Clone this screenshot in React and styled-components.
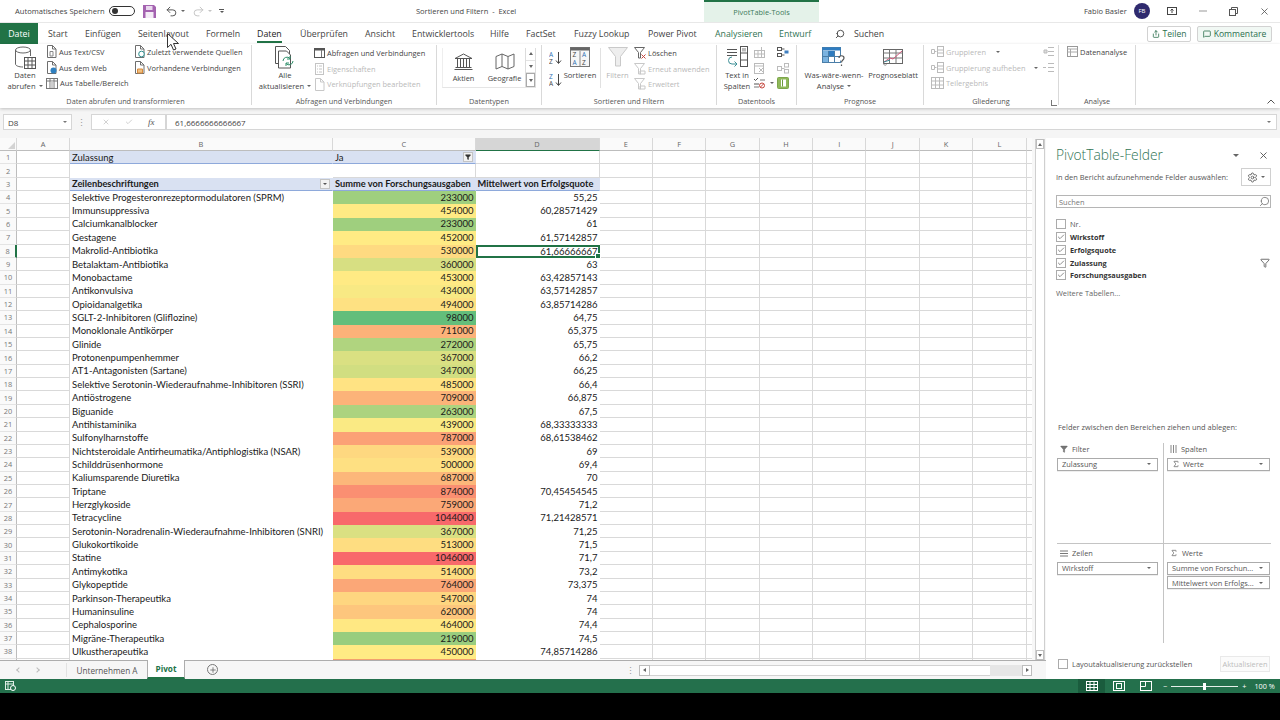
import React from "react";
import styled, { createGlobalStyle } from "styled-components";
import { Search, Undo2, Redo2, Settings, Funnel, X, Plus, Check, MessageSquare, Share, Sigma } from "lucide-react";

const UI = '"Open Sans", "Noto Sans", sans-serif';
const CELL = 'Lato, "Open Sans", sans-serif';
const GREEN = "#217346";

const Global = createGlobalStyle`
  * { box-sizing: border-box; }
  html, body { margin: 0; padding: 0; background: #000; }
  body { font-family: ${UI}; color: #444; }
`;

const Screen = styled.div`
  width: 1280px; height: 720px; overflow: hidden; display: flex; flex-direction: column;
  background: #000; position: relative;
`;

/* ---------- title bar ---------- */
const TitleBar = styled.header`
  height: 22px; flex: none; display: flex; background: #fff; font-size: 7.5px; color: #444;
`;
const QuickAccess = styled.div`
  width: 416px; padding-left: 15px; display: flex; align-items: center; flex: none;
`;
const AutoSaveLabel = styled.span` width: 94px; white-space: nowrap; font-size: 7.6px; `;
const Toggle = styled.span`
  width: 26px; height: 10px; border: 1px solid #333; border-radius: 6px; display: flex; align-items: center; padding-left: 2px;
  &::before { content: ""; width: 6px; height: 6px; border-radius: 50%; background: #333; }
`;
const QuickIcon = styled.span`
  display: flex; align-items: center; margin-left: ${p => p.$ml}px; color: ${p => p.$c || "#666"};
`;
const CustomizeMark = styled.span`
  display: flex; flex-direction: column; align-items: center; gap: 1px; margin-left: ${p => p.$ml}px;
  &::before { content: ""; width: 5px; height: 1px; background: #555; }
`;
const DocTitle = styled.div` width: 288px; flex: none; display: flex; align-items: center; white-space: pre; `;
const ToolsTab = styled.div`
  width: 115px; flex: none; background: #e4f2e9; border-top: 2px solid ${GREEN}; color: #3e7a5c;
  display: flex; align-items: center; justify-content: center; font-size: 7.4px;
`;
const TitleRight = styled.div` flex: 1; display: flex; align-items: center; padding-left: 265px; `;
const UserName = styled.span` width: 50px; white-space: nowrap; `;
const Avatar = styled.span`
  width: 16px; height: 16px; border-radius: 50%; background: #2f2a6e; color: #fff; font-size: 6px;
  display: flex; align-items: center; justify-content: center; margin-right: 6px;
`;
const WinBtn = styled.span`
  width: 31px; display: flex; justify-content: center; align-items: center; color: #555;
`;

/* ---------- tabs ---------- */
const TabBar = styled.nav`
  height: 22px; flex: none; display: flex; align-items: stretch; background: #fff; font-size: 8.8px;
  border-top: 1px solid #e8e8e8; position: relative;
`;
const FileTab = styled.div`
  width: 38px; background: ${GREEN}; color: #fff; display: flex; align-items: center; justify-content: center; margin-right: 10px;
`;
const Tab = styled.div`
  width: ${p => p.$w}px; flex: none; display: flex; align-items: center; white-space: nowrap; position: relative;
  color: ${p => (p.$ctx ? "#2f7353" : "#444")};
  ${p => p.$active && `
    color: #222;
    &::after { content: ""; position: absolute; left: 0; width: 25px; bottom: 1px; height: 2px; background: ${GREEN}; }
  `}
`;
const SearchTab = styled.div`
  width: 60px; display: flex; align-items: center; gap: 9px; flex: none; color: #444;
`;
const TabActions = styled.div`
  margin-left: 252px; display: flex; align-items: center; gap: 6px;
`;
const ActionBtn = styled.div`
  height: 16px; width: ${p => p.$w}px; border: 1px solid #d2d2d2; border-radius: 2px; display: flex; align-items: center; justify-content: center;
  gap: 3px; color: #2b6e4d; background: ${p => p.$tint ? "#f1f8f4" : "#fff"}; font-size: 8.6px;
`;

/* ---------- ribbon ---------- */
const Ribbon = styled.section`
  height: 64px; flex: none; display: flex; background: #fff; box-shadow: 0 1px 3px rgba(0,0,0,.22); position: relative; z-index: 2;
`;
const Group = styled.div`
  width: ${p => p.$w}px; flex: none; height: 60px; margin-top: 1px; display: flex; flex-direction: column;
  border-right: 1px solid #d9d9d9;
`;
const GroupBody = styled.div`
  height: 50px; flex: none; display: flex; padding-left: ${p => p.$pl || 0}px; margin-top: -1px;
`;
const GroupLabel = styled.div`
  position: relative; flex: 1; display: flex; align-items: center; justify-content: center; font-size: 7.3px; color: #555; padding-top: 2px; white-space: nowrap;
`;
const Launcher = styled.span`
  position: absolute; right: 1px; top: 6px; width: 6px; height: 6px; border-left: 1px solid #777; border-bottom: 1px solid #777;
`;
const BigButton = styled.div`
  width: ${p => p.$w}px; flex: none; display: flex; flex-direction: column; align-items: center; margin-left: ${p => p.$ml || 0}px;
  font-size: 7.6px; line-height: 11px; color: ${p => (p.$off ? "#b5b5b5" : "#444")}; white-space: nowrap;
`;
const BigIcon = styled.div`
  height: 25.5px; padding-bottom: ${p => p.$pb || 0}px; display: flex; align-items: flex-end; justify-content: center; flex: none;
`;
const SmallCol = styled.div`
  width: ${p => p.$w}px; flex: none; display: flex; flex-direction: column; margin-left: ${p => p.$ml || 0}px; padding-top: ${p => p.$pt || 0}px;
`;
const SmallItem = styled.div`
  height: 15.7px; display: flex; align-items: center; gap: 2px; white-space: nowrap; font-size: 7.45px; color: ${p => (p.$off ? "#b9b9b9" : "#444")};
  svg { flex: none; }
`;
const Caret = styled.span`
  display: inline-block; width: 0; height: 0; margin-left: ${p => p.$ml ?? 3}px; vertical-align: middle;
  border-left: ${p => p.$s || 2.2}px solid transparent; border-right: ${p => p.$s || 2.2}px solid transparent; border-top: ${p => (p.$s || 2.2) + .3}px solid ${p => p.$c || "#666"};
`;
const Gallery = styled.div`
  margin: 4px 0 0 5px; width: 94px; height: 40px; display: flex; border-left: 1px solid #eee; border-bottom: 1px solid #e5e5e5;
`;
const GalleryItem = styled.div`
  width: 41px; display: flex; flex-direction: column; align-items: center; font-size: 7.4px; color: #444; padding-top: 5px; gap: 3px; white-space: nowrap;
`;
const GalleryScroll = styled.div`
  width: 11px; margin-left: 0; display: flex; flex-direction: column; border: 1px solid #dcdcdc; border-width: 0 1px;
`;
const ScrollCell = styled.div`
  flex: 1; display: flex; align-items: center; justify-content: center; border-bottom: 1px solid #e3e3e3; font-size: 6px; color: #888;
  &:last-child { border: 1px solid #aaa; }
`;
const SortCol = styled.div`
  width: 18px; flex: none; display: flex; flex-direction: column; gap: 7.5px; padding: 7px 0 0 2px;
`;
const VRule = styled.div` width: 1px; height: 40px; margin: 4px 0 0 5px; background: #e1e1e1; flex: none; `;
const ToolGrid = styled.div`
  display: grid; grid-template-columns: 24px 14px; grid-auto-rows: 15.7px; align-items: center; justify-items: start; margin-left: -4px;
`;
const ToolCell = styled.span` display: flex; align-items: center; gap: 2px; `;
const RibbonEnd = styled.div`
  flex: 1; display: flex; align-items: flex-end; justify-content: flex-end; padding: 0 5px 4px 0; color: #666;
`;

/* ---------- formula bar ---------- */
const FormulaArea = styled.div`
  height: 30px; flex: none; background: #f5f5f5; display: flex; padding: 6px 3px 0; align-items: flex-start;
`;
const NameBox = styled.div`
  width: 69px; height: 16px; background: #fff; border: 1px solid #d6d6d6; display: flex; align-items: center; justify-content: space-between;
  padding: 0 4px; font-size: 8px; color: #444;
`;
const Dots = styled.div` width: 19px; height: 16px; display: flex; align-items: center; justify-content: center; color: #999; font-size: 9px; `;
const FxBox = styled.div`
  width: 75px; height: 16px; background: #fff; border: 1px solid #d6d6d6; display: flex; align-items: center; justify-content: space-around; padding: 0 3px;
  font-size: 8px; color: #bbb;
`;
const FxLabel = styled.span` color: #555; font-style: italic; font-family: "Liberation Serif", serif; font-size: 9px; `;
const FormulaInput = styled.div`
  flex: 1; height: 16px; background: #fff; border: 1px solid #d6d6d6; display: flex; align-items: center; justify-content: space-between; padding: 0 5px 0 8px; font-size: 8px; color: #444;
`;

/* ---------- workspace ---------- */
const Workspace = styled.main` height: 541px; flex: none; display: flex; background: #fff; `;
const SheetArea = styled.div` width: 1046px; flex: none; display: flex; flex-direction: column; `;
const SheetRow = styled.div` height: 522px; flex: none; display: flex; `;
const Grid = styled.div`
  width: 1032px; flex: none; height: 522px; overflow: hidden; display: grid;
  grid-template-columns: 17px 53px 263px 142.5px 124px repeat(8, 53.4px) 6px;
  grid-template-rows: 13px repeat(39, 13.36px);
  font-family: ${CELL}; font-size: 9.5px; color: #1a1a1a;
`;
const ColHead = styled.div`
  background: ${p => (p.$sel ? "#d6d6d6" : "#fafafa")}; border-right: 1px solid #d8d8d8; border-bottom: 1px solid ${p => (p.$sel ? GREEN : "#bdbdbd")};
  display: flex; align-items: center; justify-content: center; font-family: ${UI}; font-size: 7.4px; color: #666; position: relative;
`;
const Corner = styled(ColHead)`
  &::after { content: ""; position: absolute; right: 1px; bottom: 1px; border-left: 7px solid transparent; border-bottom: 7px solid #d3d3d3; }
`;
const RowHead = styled.div`
  background: #fafafa; border-bottom: 1px solid #e4e4e4; border-right: ${p => (p.$sel ? `2px solid ${GREEN}` : "1px solid #bdbdbd")};
  display: flex; align-items: center; justify-content: center; font-family: ${UI}; font-size: 7.4px; color: #777;
`;
const Cell = styled.div`
  min-width: 0; display: flex; align-items: center; white-space: nowrap; overflow: hidden;
  justify-content: ${p => (p.$right ? "flex-end" : p.$between ? "space-between" : "flex-start")};
  padding: 0 ${p => (p.$right ? 1 : 2)}px 0 2px; line-height: 13px;
  font-weight: ${p => (p.$bold ? 700 : 400)};
  font-size: ${p => (p.$bold ? "9.25px" : "inherit")};
  background: ${p => p.$bg || "#fff"};
  border-right: 1px solid ${p => (p.$plain ? "transparent" : "#d9d9d9")};
  border-bottom: 1px solid ${p => (p.$plain ? "transparent" : "#d9d9d9")};
`;
const HeaderCell = styled(Cell)`
  background: #d9e1f2; border-right-color: #d9e1f2; border-bottom: 1px solid #8ea9db;
`;
const SelectedCell = styled(Cell)`
  position: relative; overflow: visible; border: 2px solid ${GREEN}; padding: 0 0 0 1px; z-index: 2;
  &::after { content: ""; position: absolute; right: -3px; bottom: -3px; width: 4px; height: 4px; background: ${GREEN}; border: 1px solid #fff; }
`;
const DropBtn = styled.span`
  width: 10px; height: 10px; background: #f2f2f2; border: 1px solid #c4c4c4; display: flex; align-items: center; justify-content: center; flex: none; color: #333; font-size: 6px;
`;
const VScroll = styled.div`
  width: 14px; flex: none; padding: 1px 1px 0 3px; background: #f7f7f7; display: flex; flex-direction: column;
`;
const VTrack = styled.div`
  flex: 1; background: #fff; border-left: 1px solid #cfcfcf; border-right: 1px solid #cfcfcf; display: flex; flex-direction: column; justify-content: space-between;
`;
const ScrollArrow = styled.div`
  flex: none; height: ${p => p.$s || 10}px; width: ${p => p.$w ? p.$w + "px" : "auto"}; background: #fff; border: 1px solid #bdbdbd; display: flex; align-items: center; justify-content: center;
`;
const Tri = styled.span`
  width: 0; height: 0;
  ${p => p.$d === "u" && "border-left:2.5px solid transparent;border-right:2.5px solid transparent;border-bottom:3px solid #666;"}
  ${p => p.$d === "d" && "border-left:2.5px solid transparent;border-right:2.5px solid transparent;border-top:3px solid #666;"}
  ${p => p.$d === "l" && "border-top:2.5px solid transparent;border-bottom:2.5px solid transparent;border-right:3px solid #666;"}
  ${p => p.$d === "r" && "border-top:2.5px solid transparent;border-bottom:2.5px solid transparent;border-left:3px solid #666;"}
`;

/* ---------- sheet tabs ---------- */
const SheetTabs = styled.div`
  height: 19px; flex: none; display: flex; background: #f6f6f6; border-top: 1px solid #adadad; font-size: 8.2px; color: #555;
`;
const TabNav = styled.div`
  width: 67px; flex: none; display: flex; align-items: center; justify-content: center; gap: 14px; padding-right: 10px; border-right: 1px solid #e2e2e2; margin: 2px 0;
`;
const NavChevron = styled.span`
  width: 4px; height: 4px; border-left: 1px solid #bbb; border-bottom: 1px solid #bbb; transform: rotate(${p => p.$r}deg);
`;
const SheetTab = styled.div`
  width: ${p => p.$w}px; flex: none; display: flex; align-items: center; justify-content: center; white-space: nowrap;
  ${p => p.$active && `
    background: #fff; color: ${GREEN}; font-weight: 700; border: 1px solid #adadad; border-width: 0 1px; border-bottom: 2px solid ${GREEN}; margin-top: -1px;
  `}
`;
const AddSheet = styled.span`
  width: 11px; height: 11px; border: 1px solid #777; border-radius: 50%; margin: 3px 0 0 22px; display: flex; align-items: center; justify-content: center; color: #666; flex: none;
`;
const HScrollWrap = styled.div`
  margin-left: 408px; flex: 1; display: flex; align-items: center; gap: 0; padding-right: 14px;
`;
const HDots = styled.span` color: #999; width: 11px; font-size: 9px; margin-right: 2px; `;
const HThumb = styled.div` width: 340px; height: 11px; background: #fff; border-top: 1px solid #d2d2d2; border-bottom: 1px solid #d2d2d2; flex: none; `;
const HTrack = styled.div` flex: 1; height: 11px; background: #e6e6e6; `;

/* ---------- field panel ---------- */
const Panel = styled.aside`
  width: 234px; min-width: 0; flex: none; background: #fff; padding: 7px 9px 0 10px; display: flex; flex-direction: column; font-size: 7.45px; color: #555;
`;
const PanelHead = styled.div` height: 20px; display: flex; align-items: center; justify-content: space-between; padding-right: 2px; `;
const PanelTitle = styled.h1` margin: 0; font-weight: 300; font-size: 13.8px; color: #2f7353; line-height: 20px; `;
const PanelHeadIcons = styled.div` display: flex; align-items: center; gap: 19px; `;
const PanelSub = styled.div` height: 18px; margin-top: 3px; display: flex; align-items: center; justify-content: space-between; white-space: nowrap; `;
const GearBox = styled.div` width: 30px; height: 18px; border: 1px solid #d0d0d0; display: flex; align-items: center; justify-content: center; gap: 3px; color: #555; `;
const SearchBox = styled.div`
  height: 13px; margin-top: 9px; border: 1px solid #b5b5b5; display: flex; align-items: center; justify-content: space-between; padding: 0 0 0 2px; color: #777;
`;
const FieldList = styled.div` margin-top: 10px; display: flex; flex-direction: column; `;
const FieldRow = styled.div`
  height: 12.75px; display: flex; align-items: center; gap: 4px; font-weight: ${p => (p.$bold ? 700 : 400)}; color: ${p => (p.$bold ? "#333" : "#555")};
  font-size: ${p => (p.$bold ? "7.3px" : "inherit")};
`;
const CheckBox = styled.span`
  width: 10px; height: 10px; border: 1px solid #ababab; display: flex; align-items: center; justify-content: center; color: #555; background: #fff; flex: none;
`;
const RowFilter = styled.span` margin-left: auto; margin-right: 1px; display: flex; color: #555; `;
const MoreTables = styled.div` margin-top: 5px; height: 13px; display: flex; align-items: center; color: #666; `;
const DropHint = styled.div` margin: 121px 0 0 2px; height: 12px; display: flex; align-items: center; color: #555; white-space: nowrap; `;
const Areas = styled.div`
  margin: 10px 0 0 1px; height: 200px; display: grid; grid-template-columns: 106px 108px; grid-template-rows: 101px 99px;
`;
const Area = styled.div`
  min-width: 0; display: flex; flex-direction: column; padding-top: ${p => (p.$bottom ? 3 : 0)}px;
  ${p => p.$right ? "border-left: 1px solid #c4c4c4; padding-left: 3px; padding-right: 1px;" : "padding-right: 5px;"}
  ${p => !p.$bottom && "border-bottom: 1px solid #c4c4c4;"}
`;
const AreaHead = styled.div` height: 13px; display: flex; align-items: center; gap: 4px; padding-left: 3px; color: #555; margin-bottom: 2px; `;
const FieldPill = styled.div`
  height: 13px; flex: none; margin-bottom: 1.5px; background: #fff; border: 1px solid #ababab; box-shadow: 0 1px 0 #eee; display: flex; align-items: center; justify-content: space-between;
  padding: 0 6px 0 4px; color: #555; white-space: nowrap; gap: 3px; overflow: hidden;
`;
const PanelFoot = styled.div` margin-top: 13px; height: 16px; display: flex; align-items: center; gap: 4px; color: #555; padding-left: 2px; white-space: nowrap; `;
const UpdateBtn = styled.div`
  margin-left: auto; width: 50px; height: 16px; border: 1px solid #e9e9e9; display: flex; align-items: center; justify-content: center; color: #bcbcbc; background: #fbfbfb; margin-right: 1px;
`;

/* ---------- status bar ---------- */
const StatusBar = styled.footer`
  height: 14px; flex: none; background: #24704c; display: flex; align-items: center; color: #fff; font-size: 7.3px;
`;
const StatusLeft = styled.div` width: 1078px; flex: none; padding-left: 5px; display: flex; align-items: center; `;
const ViewBtn = styled.span`
  width: 27px; height: 14px; flex: none; display: flex; align-items: center; justify-content: center; background: ${p => (p.$on ? "#1a5c3d" : "transparent")};
`;
const ZoomMinus = styled.span` margin-left: 4px; `;
const Slider = styled.div`
  width: 67px; height: 1px; background: #e6f0ea; margin: 0 4px; position: relative;
  &::after { content: ""; position: absolute; left: 32px; top: -3px; width: 3px; height: 7px; background: #fff; }
`;
const Zoom = styled.span` margin-left: 8px; white-space: nowrap; `;
const Black = styled.div` flex: 1; background: #000; `;

/* cursor lies over the tab row */
const CursorWrap = styled.div` position: absolute; left: 167px; top: 33px; z-index: 5; `;

/* ---------- drawings ---------- */
const Ic = ({ w = 12, h = 12, children }) => (
  <svg width={w} height={h} viewBox={`0 0 ${w} ${h}`} fill="none" stroke="#666" strokeWidth="1">{children}</svg>
);
const PageIc = ({ accent, off }) => (
  <Ic w={11} h={13}>
    <path d="M1.5.5h5l3.5 3.5v8.500h-8.500z" stroke={off ? "#c8c8c8" : "#6e6e6e"} fill="#fff" />
    <path d="M6.500.5v3.500h3.500" stroke={off ? "#c8c8c8" : "#6e6e6e"} />
    {accent}
  </Ic>
);
const TableSmall = () => (
  <Ic w={12} h={12}>
    <rect x=".5" y="1.500" width="11" height="10" stroke="#777" />
    <path d="M.5 4h11M4 1.500v10M8 1.500v10" stroke="#777" />
    <rect x="4.500" y="4.500" width="3" height="6.500" fill="#cfcfcf" stroke="none" />
  </Ic>
);
const DbIcon = () => (
  <Ic w={22} h={24}>
    <ellipse cx="9" cy="4" rx="7.500" ry="3" stroke="#666" fill="#fff" />
    <path d="M1.500 4v14c0 1.800 3.400 3 7.500 3M16.500 4v6" stroke="#666" />
    <rect x="10.500" y="11.500" width="11" height="11" fill="#fff" stroke="#555" />
    <path d="M10.500 15h11M10.500 19h11M14 11.500v11M18 11.500v11" stroke="#555" />
  </Ic>
);
const RefreshIcon = () => (
  <Ic w={22} h={24}>
    <path d="M1.500.5h10l4 4v13h-14z" stroke="#555" fill="#fff" />
    <path d="M4.500 5h8l4 4v13h-12z" stroke="#555" fill="#fff" />
    <path d="M9 15a4 4 0 0 1 7-2.500M19 15a4 4 0 0 1-7 2.500" stroke="#2f8f6a" />
    <path d="M16 10v3h-3M12 20v-3h3" stroke="#2f8f6a" />
  </Ic>
);
const PanelIc = () => (
  <Ic w={11} h={11}>
    <rect x=".5" y="1.500" width="10" height="9" stroke="#555" />
    <rect x=".5" y="1.500" width="10" height="2" fill="#555" stroke="none" />
    <path d="M7.500 3v7" stroke="#777" />
  </Ic>
);
const ListIc = () => (
  <Ic w={11} h={12}>
    <rect x="1.500" y=".5" width="8" height="11" stroke="#c4c4c4" />
    <path d="M3 3h1M5 3h3M3 6h1M5 6h3M3 9h1M5 9h3" stroke="#c4c4c4" />
  </Ic>
);
const BankIc = () => (
  <Ic w={19} h={17}>
    <path d="M9.500 1 18 5.500H1z" stroke="#555" fill="#fff" />
    <path d="M3.500 6v8M6.500 6v8M9.500 6v8M12.500 6v8M15.500 6v8M1.500 14.500h16M.5 16.500h18" stroke="#555" />
  </Ic>
);
const MapIc = () => (
  <Ic w={20} h={17}>
    <path d="M1 3.500 7 1l6 2.500L19 1v12.500l-6 2.500-6-2.500-6 2.500z" stroke="#666" />
    <path d="M7 1v12.500M13 3.500V16" stroke="#666" />
  </Ic>
);
const SortSmall = ({ top, bottom }) => (
  <svg width="13" height="14" viewBox="0 0 13 14" fill="none">
    <text x="0" y="6" fontSize="6.500" fontFamily={UI} fill="#2f6fb0" stroke="none">{top}</text>
    <text x="0" y="13" fontSize="6.500" fontFamily={UI} fill="#444" stroke="none">{bottom}</text>
    <path d="M9.500 1v11M7 9.500l2.500 3 2.500-3" stroke="#444" />
  </svg>
);
const SortBig = () => (
  <svg width="20" height="20" viewBox="0 0 20 20" fill="none">
    <rect x=".5" y=".5" width="19" height="19" stroke="#777" fill="#f6f6f6" />
    <rect x=".5" y=".5" width="19" height="3" fill="#666" stroke="none" />
    <path d="M10 4v15" stroke="#888" />
    <text x="2.500" y="10" fontSize="6.500" fontFamily={UI} fill="#444">Z</text>
    <text x="2.500" y="17.500" fontSize="6.500" fontFamily={UI} fill="#2f6fb0">A</text>
    <text x="12" y="10" fontSize="6.500" fontFamily={UI} fill="#2f6fb0">A</text>
    <text x="12" y="17.500" fontSize="6.500" fontFamily={UI} fill="#444">Z</text>
  </svg>
);
const FunnelBig = () => (
  <svg width="20" height="20" viewBox="0 0 20 20" fill="#eeeeee" stroke="#c9c9c9"><path d="M.5.5h19l-7 9v9.500h-5V9.500z" /></svg>
);
const FunnelSmall = ({ off, red }) => (
  <svg width="12" height="12" viewBox="0 0 12 12" fill="none">
    <path d="M.5.5h10L6.500 5.500v5.500H4.500V5.500z" stroke={off ? "#c8c8c8" : "#666"} />
    {red && <path d="M7.500 7.500l4 4M11.500 7.500l-4 4" stroke="#c4453c" />}
    {off && <path d="M6 8h5v3H6z" stroke="#c8c8c8" />}
  </svg>
);
const TextColsIc = () => (
  <Ic w={22} h={21}>
    <path d="M1 3.500h10M1 6.500h10M1 9.500h10" stroke="#555" />
    <rect x="14.500" y=".5" width="7" height="20" stroke="#555" />
    <path d="M14.500 7h7M14.500 14h7" stroke="#555" />
    <rect x="16" y="2" width="4" height="3.500" fill="#bbb" stroke="none" />
    <path d="M11 18H6a3.500 3.500 0 0 1 0-7M8.500 15.500 11 18l-2.500 2.500" stroke="#3c8f96" />
  </Ic>
);
const ToolIc = ({ v }) => (
  <Ic w={12} h={12}>
    {v === 0 && <><rect x="1.500" y="4.500" width="10" height="7" stroke="#bbb" /><path d="M1.500 8h10M5 4.500v7M8.500 1v10" stroke="#bbb" /></>}
    {v === 1 && <><rect x="1.500" y="1.500" width="9" height="10" stroke="#bbb" /><path d="M1.500 4h9" stroke="#bbb" /><path d="M6 6l4 4M10 6l-4 4" stroke="#bbb" /></>}
    {v === 2 && <><path d="M1 2l1.500 1.500L5 1M1 7h5" stroke="#555" /><path d="M7 3h5M1 10h5" stroke="#777" /><circle cx="9" cy="8.500" r="2.500" stroke="#c4453c" /><path d="M7.500 10l3-3" stroke="#c4453c" /></>}
    {v === 3 && <><rect x=".5" y="1.500" width="4" height="3" stroke="#555" /><rect x=".5" y="7.500" width="4" height="3" stroke="#555" /><path d="M4.500 3h3M4.500 9h3" stroke="#555" /><rect x="7.500" y="4.500" width="4" height="3" fill="#3f7fc0" stroke="none" /></>}
    {v === 4 && <><rect x=".5" y="4.500" width="4" height="4" stroke="#bbb" /><rect x="7.500" y="1.500" width="4" height="3.500" stroke="#bbb" /><rect x="7.500" y="7.500" width="4" height="3.500" stroke="#bbb" /><path d="M4.500 6.500h3" stroke="#bbb" /></>}
    {v === 5 && <><rect x=".5" y=".5" width="11" height="11" rx="1" fill="#8fb85a" stroke="#7da64b" /><rect x="4" y="2.500" width="5" height="7" fill="#fff" stroke="none" /><path d="M5.500 2.500v7" stroke="#6d9a3d" /></>}
  </Ic>
);
const WhatIfIc = () => (
  <Ic w={24} h={20}>
    <rect x=".5" y=".5" width="18" height="15" stroke="#4a7ea8" fill="#fff" />
    <rect x=".5" y=".5" width="18" height="3" fill="#2f7cc0" stroke="none" />
    <rect x="1" y="4" width="5.500" height="5.500" fill="#7ab3e0" stroke="none" />
    <rect x="1" y="10" width="5.500" height="5" fill="#7ab3e0" stroke="none" />
    <rect x="7" y="4" width="5.500" height="5.500" fill="#2f7cc0" stroke="none" />
    <path d="M6.500 4v11.500M12.500 4v11.500M1 9.500h17" stroke="#4a7ea8" />
    <path d="M17 11c0-3 5-3 5 0 0 2-2.500 2-2.500 4.500M19.500 17.500v1.500" stroke="#555" strokeWidth="1.200" fill="#fff" />
  </Ic>
);
const ForecastIc = () => (
  <Ic w={20} h={18}>
    <rect x=".5" y=".5" width="19" height="14" stroke="#666" fill="#fff" />
    <path d="M.5 4h19M.5 9h19M6.500.5v14M13 .5v14" stroke="#777" />
    <path d="M1 13l6-4 3 1 9-8" stroke="#d0577a" />
    <path d="M1 13l6-2" stroke="#3c8f96" />
    <path d="M.5 14.500c0 2 3 2 3 1" stroke="#888" />
  </Ic>
);
const GroupIc = () => (
  <Ic w={13} h={11}>
    <path d="M.5 3.500h3v4h-3zM3.500 5.500h2" stroke="#bbb" />
    <rect x="6.500" y=".5" width="6" height="10" stroke="#bbb" />
    <path d="M6.500 4h6M6.500 7h6" stroke="#bbb" />
  </Ic>
);
const SubtotalIc = () => (
  <Ic w={13} h={12}>
    <rect x=".5" y=".5" width="12" height="11" stroke="#bbb" />
    <path d="M.5 4h12M.5 8h12M4.500.5v11M8.500.5v11" stroke="#bbb" />
  </Ic>
);
const OutlineIc = ({ alt }) => (
  <Ic w={11} h={9}>
    <path d="M5 .5h6M5 4.500h6M5 8.500h6" stroke="#bbb" />
    {alt ? <path d="M0 4.500h3" stroke="#bbb" /> : <path d="M1 3h3v3H1z" fill="#ddd" stroke="#bbb" />}
  </Ic>
);
const SaveIc = () => (
  <svg width="13" height="13" viewBox="0 0 13 13"><path d="M0 0h11l2 2v11H0z" fill="#a463b0" /><rect x="3" y="1" width="6.500" height="4" fill="#e9d8ee" /><rect x="2.500" y="7" width="8" height="6" fill="#f4ecf6" /></svg>
);
const StatGrid = () => (
  <Ic w={12} h={10}>
    <rect x=".5" y=".5" width="11" height="9" stroke="#fff" />
    <path d="M.5 3.500h11M.5 6.500h11M4 .5v9M8 .5v9" stroke="#fff" />
  </Ic>
);
const StatPage = () => (
  <Ic w={12} h={10}>
    <rect x=".5" y=".5" width="11" height="9" stroke="#fff" />
    <rect x="3.500" y="2.500" width="5" height="5" stroke="#fff" />
  </Ic>
);
const StatBreak = () => (
  <Ic w={12} h={10}>
    <rect x=".5" y=".5" width="11" height="9" stroke="#fff" />
    <path d="M.5 5.500h5v-5" stroke="#fff" />
  </Ic>
);
const MacroIc = () => (
  <Ic w={11} h={10}>
    <rect x=".5" y=".5" width="8" height="8" stroke="#dfeee6" />
    <path d="M.5 3h8M3 .5v8" stroke="#dfeee6" />
    <circle cx="8" cy="7" r="2.500" fill="#24704c" stroke="#fff" />
  </Ic>
);

/* ---------- data ---------- */
const rows = [
  ["Selektive Progesteronrezeptormodulatoren (SPRM)", 233000, "55,25"],
  ["Immunsuppressiva", 454000, "60,28571429"],
  ["Calciumkanalblocker", 233000, "61"],
  ["Gestagene", 452000, "61,57142857"],
  ["Makrolid-Antibiotika", 530000, "61,66666667"],
  ["Betalaktam-Antibiotika", 360000, "63"],
  ["Monobactame", 453000, "63,42857143"],
  ["Antikonvulsiva", 434000, "63,57142857"],
  ["Opioidanalgetika", 494000, "63,85714286"],
  ["SGLT-2-Inhibitoren (Gliflozine)", 98000, "64,75"],
  ["Monoklonale Antikörper", 711000, "65,375"],
  ["Glinide", 272000, "65,75"],
  ["Protonenpumpenhemmer", 367000, "66,2"],
  ["AT1-Antagonisten (Sartane)", 347000, "66,25"],
  ["Selektive Serotonin-Wiederaufnahme-Inhibitoren (SSRI)", 485000, "66,4"],
  ["Antiöstrogene", 709000, "66,875"],
  ["Biguanide", 263000, "67,5"],
  ["Antihistaminika", 439000, "68,33333333"],
  ["Sulfonylharnstoffe", 787000, "68,61538462"],
  ["Nichtsteroidale Antirheumatika/Antiphlogistika (NSAR)", 539000, "69"],
  ["Schilddrüsenhormone", 500000, "69,4"],
  ["Kaliumsparende Diuretika", 687000, "70"],
  ["Triptane", 874000, "70,45454545"],
  ["Herzglykoside", 759000, "71,2"],
  ["Tetracycline", 1044000, "71,21428571"],
  ["Serotonin-Noradrenalin-Wiederaufnahme-Inhibitoren (SNRI)", 367000, "71,25"],
  ["Glukokortikoide", 513000, "71,5"],
  ["Statine", 1046000, "71,7"],
  ["Antimykotika", 514000, "73,2"],
  ["Glykopeptide", 764000, "73,375"],
  ["Parkinson-Therapeutika", 547000, "74"],
  ["Humaninsuline", 620000, "74"],
  ["Cephalosporine", 464000, "74,4"],
  ["Migräne-Therapeutika", 219000, "74,5"],
  ["Ulkustherapeutika", 450000, "74,85714286"],
];
const scale = v => {
  const lo = [99, 190, 123], mid = [255, 235, 132], hi = [248, 105, 107];
  const M = 450000;
  const [a, b, t] = v <= M ? [lo, mid, (v - 98000) / (M - 98000)] : [mid, hi, (v - M) / (1046000 - M)];
  const c = a.map((x, i) => Math.round(x + (b[i] - x) * t));
  return `rgb(${c.join(",")})`;
};
const cols = ["A", "B", "C", "D", "E", "F", "G", "H", "I", "J", "K", "L", "M"];
const tailCols = cols.slice(4);

const TailCells = ({ r }) => tailCols.map(c => <Cell key={c + r} />);

const Sheet = () => (
  <Grid>
    <Corner />
    {cols.map(c => <ColHead key={c} $sel={c === "D"}>{c === "M" ? "" : c}</ColHead>)}

    <RowHead>1</RowHead><Cell />
    <HeaderCell>Zulassung</HeaderCell>
    <HeaderCell $between>Ja<DropBtn><Funnel size={6} fill="#333" /></DropBtn></HeaderCell>
    <Cell /><TailCells r="1" />

    <RowHead>2</RowHead><Cell /><Cell $plain /><Cell /><Cell /><TailCells r="2" />

    <RowHead>3</RowHead><Cell />
    <HeaderCell $bold $between>Zeilenbeschriftungen<DropBtn><Caret $ml={0} $c="#555" /></DropBtn></HeaderCell>
    <HeaderCell $bold>Summe von Forschungsausgaben</HeaderCell>
    <HeaderCell $bold>Mittelwert von Erfolgsquote</HeaderCell>
    <TailCells r="3" />

    {rows.map(([name, val, avg], i) => {
      const n = i + 4;
      const sel = n === 8;
      const Avg = sel ? SelectedCell : Cell;
      return (
        <React.Fragment key={n}>
          <RowHead $sel={sel}>{n}</RowHead>
          <Cell />
          <Cell $plain>{name}</Cell>
          <Cell $plain $right style={{ background: scale(val) }}>{val}</Cell>
          <Avg $plain={!sel} $right>{avg}</Avg>
          <TailCells r={n} />
        </React.Fragment>
      );
    })}
    <RowHead /><Cell /><Cell $plain />
    <Cell $plain style={{ background: "#f2a06e" }} /><Cell $plain /><TailCells r="39" />
  </Grid>
);

const tabs = [
  ["Start", 37], ["Einfügen", 53], ["Seitenlayout", 68], ["Formeln", 51], ["Daten", 43, true], ["Überprüfen", 65],
  ["Ansicht", 47], ["Entwicklertools", 78], ["Hilfe", 36], ["FactSet", 48], ["Fuzzy Lookup", 74], ["Power Pivot", 67],
];

export default function App() {
  return (
    <Screen>
      <Global />
      <TitleBar>
        <QuickAccess>
          <AutoSaveLabel>Automatisches Speichern</AutoSaveLabel>
          <Toggle />
          <QuickIcon $ml={8}><SaveIc /></QuickIcon>
          <QuickIcon $ml={9} $c="#555"><Undo2 size={13} strokeWidth={1.8} /><Caret /></QuickIcon>
          <QuickIcon $ml={7} $c="#c4c4c4"><Redo2 size={13} strokeWidth={1.8} /><Caret $c="#c4c4c4" /></QuickIcon>
          <CustomizeMark $ml={7}><Caret $ml={0} $c="#555" /></CustomizeMark>
        </QuickAccess>
        <DocTitle>Sortieren und Filtern  -  Excel</DocTitle>
        <ToolsTab>PivotTable-Tools</ToolsTab>
        <TitleRight>
          <UserName>Fabio Basler</UserName>
          <Avatar>FB</Avatar>
          <WinBtn><Ic w={10} h={8}><rect x=".5" y=".5" width="9" height="7" stroke="#444" /><path d="M5 6V2M3.500 3.500 5 2l1.500 1.500" stroke="#444" /></Ic></WinBtn>
          <WinBtn><Ic w={8} h={2}><path d="M0 1h8" stroke="#999" /></Ic></WinBtn>
          <WinBtn><Ic w={9} h={9}><rect x=".5" y="2.500" width="6" height="6" stroke="#555" /><path d="M2.500 2.500v-2h6v6h-2" stroke="#555" /></Ic></WinBtn>
          <WinBtn><X size={11} strokeWidth={1.8} /></WinBtn>
        </TitleRight>
      </TitleBar>

      <TabBar>
        <FileTab>Datei</FileTab>
        {tabs.map(([t, w, a]) => <Tab key={t} $w={w} $active={a}>{t}</Tab>)}
        <Tab $w={64} $ctx>Analysieren</Tab>
        <Tab $w={56} $ctx>Entwurf</Tab>
        <SearchTab><Search size={10} strokeWidth={2.2} style={{ transform: "scaleX(-1)" }} />Suchen</SearchTab>
        <TabActions>
          <ActionBtn $w={44}><Share size={8} strokeWidth={2.4} />Teilen</ActionBtn>
          <ActionBtn $w={75} $tint><MessageSquare size={8} strokeWidth={2.4} />Kommentare</ActionBtn>
        </TabActions>
      </TabBar>

      <Ribbon>
        <Group $w={252}>
          <GroupBody $pl={5}>
            <BigButton $w={40}>
              <BigIcon><DbIcon /></BigIcon>
              <span>Daten</span>
              <span>abrufen<Caret /></span>
            </BigButton>
            <SmallCol $w={88} $ml={1}>
              <SmallItem><PageIc accent={<path d="M4 6.500h3v4.500H4z" stroke="#888" />} />Aus Text/CSV</SmallItem>
              <SmallItem><PageIc accent={<circle cx="7.500" cy="9.500" r="3" fill="#2f80c0" stroke="none" />} />Aus dem Web</SmallItem>
              <SmallItem><TableSmall />Aus Tabelle/Bereich</SmallItem>
            </SmallCol>
            <SmallCol $w={105}>
              <SmallItem><PageIc accent={<circle cx="7.500" cy="9" r="2.800" stroke="#2f8f8f" fill="#fff" />} />Zuletzt verwendete Quellen</SmallItem>
              <SmallItem><PageIc accent={<path d="M3.500 8h5v4h-5z" fill="#f0c080" stroke="#d98a3a" />} />Vorhandene Verbindungen</SmallItem>
            </SmallCol>
          </GroupBody>
          <GroupLabel>Daten abrufen und transformieren</GroupLabel>
        </Group>

        <Group $w={185}>
          <GroupBody $pl={7}>
            <BigButton $w={52}>
              <BigIcon><RefreshIcon /></BigIcon>
              <span>Alle</span>
              <span>aktualisieren<Caret /></span>
            </BigButton>
            <SmallCol $w={120} $ml={3} $pt={1}>
              <SmallItem><PanelIc />Abfragen und Verbindungen</SmallItem>
              <SmallItem $off><ListIc />Eigenschaften</SmallItem>
              <SmallItem $off><PageIc off />Verknüpfungen bearbeiten</SmallItem>
            </SmallCol>
          </GroupBody>
          <GroupLabel>Abfragen und Verbindungen</GroupLabel>
        </Group>

        <Group $w={105}>
          <GroupBody>
            <Gallery>
              <GalleryItem><BankIc />Aktien</GalleryItem>
              <GalleryItem><MapIc />Geografie</GalleryItem>
              <GalleryScroll>
                <ScrollCell><Tri $d="u" /></ScrollCell>
                <ScrollCell><Tri $d="d" /></ScrollCell>
                <ScrollCell><Tri $d="d" /></ScrollCell>
              </GalleryScroll>
            </Gallery>
          </GroupBody>
          <GroupLabel>Datentypen</GroupLabel>
        </Group>

        <Group $w={175}>
          <GroupBody $pl={5}>
            <SortCol>
              <SortSmall top="A" bottom="Z" />
              <SortSmall top="Z" bottom="A" />
            </SortCol>
            <BigButton $w={30}>
              <BigIcon $pb={3}><SortBig /></BigIcon>
              <span>Sortieren</span>
            </BigButton>
            <VRule />
            <BigButton $w={33} $off>
              <BigIcon $pb={3}><FunnelBig /></BigIcon>
              <span>Filtern</span>
            </BigButton>
            <SmallCol $w={80} $pt={1}>
              <SmallItem><FunnelSmall red />Löschen</SmallItem>
              <SmallItem $off><FunnelSmall off />Erneut anwenden</SmallItem>
              <SmallItem $off><FunnelSmall off />Erweitert</SmallItem>
            </SmallCol>
          </GroupBody>
          <GroupLabel>Sortieren und Filtern</GroupLabel>
        </Group>

        <Group $w={80}>
          <GroupBody>
            <BigButton $w={40}>
              <BigIcon $pb={3}><TextColsIc /></BigIcon>
              <span>Text in</span>
              <span>Spalten</span>
            </BigButton>
            <ToolGrid>
              <ToolCell><ToolIc v={0} /></ToolCell><ToolCell><ToolIc v={3} /></ToolCell>
              <ToolCell><ToolIc v={1} /></ToolCell><ToolCell><ToolIc v={4} /></ToolCell>
              <ToolCell><ToolIc v={2} /><Caret /></ToolCell><ToolCell><ToolIc v={5} /></ToolCell>
            </ToolGrid>
          </GroupBody>
          <GroupLabel>Datentools</GroupLabel>
        </Group>

        <Group $w={127}>
          <GroupBody>
            <BigButton $w={72} $ml={1}>
              <BigIcon $pb={3}><WhatIfIc /></BigIcon>
              <span>Was-wäre-wenn-</span>
              <span>Analyse<Caret /></span>
            </BigButton>
            <BigButton $w={46}>
              <BigIcon $pb={3}><ForecastIc /></BigIcon>
              <span>Prognoseblatt</span>
            </BigButton>
          </GroupBody>
          <GroupLabel>Prognose</GroupLabel>
        </Group>

        <Group $w={135}>
          <GroupBody $pl={7}>
            <SmallCol $w={112}>
              <SmallItem $off><GroupIc />Gruppieren<Caret $ml={8} /></SmallItem>
              <SmallItem $off><GroupIc />Gruppierung aufheben<Caret $ml={6} /></SmallItem>
              <SmallItem $off><SubtotalIc />Teilergebnis</SmallItem>
            </SmallCol>
            <SmallCol $w={14}>
              <SmallItem><OutlineIc /></SmallItem>
              <SmallItem><OutlineIc alt /></SmallItem>
            </SmallCol>
          </GroupBody>
          <GroupLabel>Gliederung<Launcher /></GroupLabel>
        </Group>

        <Group $w={77}>
          <GroupBody $pl={8}>
            <SmallCol $w={66}>
              <SmallItem><Ic w={11} h={11}><rect x=".5" y=".5" width="10" height="10" stroke="#999" /><path d="M.5 3h10M3.500 3v7.500M.5 6h10" stroke="#aaa" /></Ic>Datenanalyse</SmallItem>
            </SmallCol>
          </GroupBody>
          <GroupLabel>Analyse</GroupLabel>
        </Group>
        <RibbonEnd>
          <Ic w={8} h={5}><path d="M.5 4.500 4 1l3.500 3.500" stroke="#555" /></Ic>
        </RibbonEnd>
      </Ribbon>

      <FormulaArea>
        <NameBox>D8<Caret $c="#777" /></NameBox>
        <Dots>⋮</Dots>
        <FxBox><X size={8} color="#bbb" /><Check size={8} color="#bbb" /><FxLabel>fx</FxLabel></FxBox>
        <FormulaInput>61,6666666666667<Caret $c="#777" /></FormulaInput>
      </FormulaArea>

      <Workspace>
        <SheetArea>
          <SheetRow>
            <Sheet />
            <VScroll>
              <VTrack>
                <ScrollArrow><Tri $d="u" /></ScrollArrow>
                <ScrollArrow><Tri $d="d" /></ScrollArrow>
              </VTrack>
            </VScroll>
          </SheetRow>
          <SheetTabs>
            <TabNav><NavChevron $r={45} /><NavChevron $r={225} /></TabNav>
            <SheetTab $w={80}>Unternehmen A</SheetTab>
            <SheetTab $w={38} $active>Pivot</SheetTab>
            <AddSheet><Plus size={8} strokeWidth={2.4} /></AddSheet>
            <HScrollWrap>
              <HDots>⋮</HDots>
              <ScrollArrow $w={11} $s={11}><Tri $d="l" /></ScrollArrow>
              <HThumb />
              <HTrack />
              <ScrollArrow $w={10} $s={11}><Tri $d="r" /></ScrollArrow>
            </HScrollWrap>
          </SheetTabs>
        </SheetArea>

        <Panel>
          <PanelHead>
            <PanelTitle>PivotTable-Felder</PanelTitle>
            <PanelHeadIcons><Caret $ml={0} $s={3} /><X size={11} strokeWidth={2} /></PanelHeadIcons>
          </PanelHead>
          <PanelSub>
            In den Bericht aufzunehmende Felder auswählen:
            <GearBox><Settings size={11} strokeWidth={1.8} /><Caret $ml={0} /></GearBox>
          </PanelSub>
          <SearchBox>Suchen<Search size={11} strokeWidth={1.8} style={{ transform: "scaleX(-1)" }} /></SearchBox>
          <FieldList>
            <FieldRow><CheckBox />Nr.</FieldRow>
            <FieldRow $bold><CheckBox><Check size={8} strokeWidth={2} /></CheckBox>Wirkstoff</FieldRow>
            <FieldRow $bold><CheckBox><Check size={8} strokeWidth={2} /></CheckBox>Erfolgsquote</FieldRow>
            <FieldRow $bold><CheckBox><Check size={8} strokeWidth={2} /></CheckBox>Zulassung<RowFilter><Funnel size={10} strokeWidth={2} /></RowFilter></FieldRow>
            <FieldRow $bold><CheckBox><Check size={8} strokeWidth={2} /></CheckBox>Forschungsausgaben</FieldRow>
          </FieldList>
          <MoreTables>Weitere Tabellen...</MoreTables>
          <DropHint>Felder zwischen den Bereichen ziehen und ablegen:</DropHint>
          <Areas>
            <Area>
              <AreaHead><Funnel size={8} fill="#777" strokeWidth={1} />Filter</AreaHead>
              <FieldPill>Zulassung<Caret $ml={0} /></FieldPill>
            </Area>
            <Area $right>
              <AreaHead><Ic w={7} h={8}><path d="M1 0v8M3.500 0v8M6 0v8" stroke="#888" /></Ic>Spalten</AreaHead>
              <FieldPill><span><Sigma size={8} style={{ verticalAlign: -1, marginRight: 3 }} />Werte</span><Caret $ml={0} /></FieldPill>
            </Area>
            <Area $bottom>
              <AreaHead><Ic w={8} h={7}><path d="M0 1h8M0 3.500h8M0 6h8" stroke="#777" /></Ic>Zeilen</AreaHead>
              <FieldPill>Wirkstoff<Caret $ml={0} /></FieldPill>
            </Area>
            <Area $right $bottom>
              <AreaHead><Sigma size={8} />Werte</AreaHead>
              <FieldPill>Summe von Forschun...<Caret $ml={0} /></FieldPill>
              <FieldPill>Mittelwert von Erfolgs...<Caret $ml={0} /></FieldPill>
            </Area>
          </Areas>
          <PanelFoot>
            <CheckBox />
            Layoutaktualisierung zurückstellen
            <UpdateBtn>Aktualisieren</UpdateBtn>
          </PanelFoot>
        </Panel>
      </Workspace>

      <StatusBar>
        <StatusLeft><MacroIc /></StatusLeft>
        <ViewBtn $on><StatGrid /></ViewBtn>
        <ViewBtn><StatPage /></ViewBtn>
        <ViewBtn><StatBreak /></ViewBtn>
        <ZoomMinus>−</ZoomMinus>
        <Slider />
        <span>+</span>
        <Zoom>100 %</Zoom>
      </StatusBar>
      <Black />

      <CursorWrap>
        <svg width="12" height="18" viewBox="0 0 12 18"><path d="M.5.5v14l3.500-3.200 2.500 5.700 2.500-1-2.500-5.500h5z" fill="#fff" stroke="#333" strokeWidth="1" /></svg>
      </CursorWrap>
    </Screen>
  );
}
